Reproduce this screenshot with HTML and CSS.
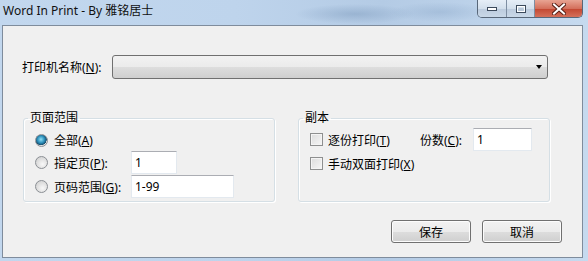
FILE: index.html
```html
<!DOCTYPE html>
<html lang="zh-CN">
<head>
    <meta charset="UTF-8">
    <title>Word In Print - By 雅铭居士</title>
    <link rel="stylesheet" href="styles.css">
</head>
<body>
    <div class="window">
        <div class="titlebar">
            <span class="title">Word In Print - By 雅铭居士</span>
            <div class="caption">
                <span class="cap cap-min">
                    <svg width="12" height="6" viewBox="0 0 12 6"><rect x="1.5" y="1.5" width="9" height="3" fill="#fff" stroke="#3c4a5c" stroke-width="1"/></svg>
                </span>
                <span class="cap cap-max">
                    <svg width="12" height="10" viewBox="0 0 12 10"><rect x="1.5" y="1.5" width="9" height="7" fill="none" stroke="#3c4a5c" stroke-width="1"/><rect x="2.5" y="2.5" width="7" height="5" fill="none" stroke="#fff" stroke-width="1"/><rect x="3.5" y="4" width="5" height="3" fill="#b8c7d8"/></svg>
                </span>
                <span class="cap cap-close">
                    <svg width="14" height="12" viewBox="0 0 14 12"><path d="M2 1.5 L12 10.5 M12 1.5 L2 10.5" stroke="#5a2218" stroke-width="4" stroke-linecap="square"/><path d="M2 1.5 L12 10.5 M12 1.5 L2 10.5" stroke="#fff" stroke-width="2" stroke-linecap="square"/></svg>
                </span>
            </div>
        </div>
        <div class="client">
            <div class="printer-row">
                <label class="printer-label">打印机名称(<u>N</u>):</label>
                <div class="combo"><span class="combo-arrow"></span></div>
            </div>
            <div class="groups">
                <fieldset class="group group-range">
                    <legend>页面范围</legend>
                    <div class="row row-first">
                        <span class="radio checked"></span>
                        <span>全部(<u>A</u>)</span>
                    </div>
                    <div class="row">
                        <span class="radio"></span>
                        <span class="field-label">指定页(<u>P</u>):</span>
                        <span class="textbox tb-page">1</span>
                    </div>
                    <div class="row">
                        <span class="radio"></span>
                        <span class="field-label">页码范围(<u>G</u>):</span>
                        <span class="textbox tb-range">1-99</span>
                    </div>
                </fieldset>
                <fieldset class="group group-copies">
                    <legend>副本</legend>
                    <div class="row">
                        <span class="check"></span>
                        <span class="collate-label">逐份打印(<u>T</u>)</span>
                        <span class="count-label">份数(<u>C</u>):</span>
                        <span class="textbox tb-count">1</span>
                    </div>
                    <div class="row">
                        <span class="check"></span>
                        <span>手动双面打印(<u>X</u>)</span>
                    </div>
                </fieldset>
            </div>
            <div class="actions">
                <button class="btn">保存</button>
                <button class="btn">取消</button>
            </div>
        </div>
    </div>
</body>
</html>
```

FILE: styles.css
```css
html, body {
    margin: 0;
    width: 588px;
    height: 261px;
    overflow: hidden;
}
body {
    font-family: "Noto Sans", "Noto Sans CJK SC", sans-serif;
    font-size: 12px;
    color: #000;
}
.window {
    height: 261px;
    display: flex;
    flex-direction: column;
    background: linear-gradient(90deg, #c2d7ee 0%, #bed4ec 40%, #b4cbe5 65%, #c6daef 100%);
}
.titlebar {
    height: 25px;
    display: flex;
    justify-content: space-between;
    align-items: flex-start;
    background:
        radial-gradient(ellipse 60px 10px at 355px 14px, rgba(120,150,185,0.45), transparent),
        radial-gradient(ellipse 50px 10px at 440px 12px, rgba(130,160,195,0.35), transparent);
}
.title {
    padding: 3px 0 0 3px;
    line-height: 16px;
    font-size: 12px;
    color: #111;
}
.caption {
    display: flex;
    margin-right: 5px;
    border: 1px solid #586779;
    border-top: none;
    border-radius: 0 0 5px 5px;
    overflow: hidden;
    height: 17px;
}
.cap {
    display: flex;
    align-items: center;
    justify-content: center;
    height: 17px;
}
.cap-min, .cap-max {
    width: 27px;
    background: linear-gradient(180deg, #e6eef7 0%, #d3dfec 50%, #bccbdd 51%, #c9d8e8 100%);
    border-right: 1px solid #7e8ea2;
}
.cap-min {
    width: 28px;
}
.cap-close {
    width: 47px;
    background: linear-gradient(180deg, #e8a493 0%, #d4705c 50%, #c24630 51%, #d5705a 100%);
}
.client {
    flex: 1;
    margin: 0 5px 3px 2px;
    border: 1px solid #7f8c9c;
    background: #f0f0f0;
    display: flex;
    flex-direction: column;
}
.printer-row {
    display: flex;
    align-items: center;
    padding: 29px 0 0 19px;
}
.printer-label {
    width: 90px;
    flex: none;
}
.combo {
    width: 434px;
    height: 22px;
    border: 1px solid #707070;
    border-radius: 3px;
    background: linear-gradient(180deg, #f2f2f2 0%, #ebebeb 50%, #dddddd 51%, #cfcfcf 100%);
    position: relative;
}
.combo-arrow {
    position: absolute;
    right: 5px;
    top: 9px;
    border-left: 3.5px solid transparent;
    border-right: 3.5px solid transparent;
    border-top: 4px solid #000;
}
.groups {
    display: flex;
    gap: 23px;
    padding-left: 20px;
    margin-top: 32px;
}
.group {
    width: 239px;
    height: 86px;
    margin: 0;
    padding: 3px 0 0 11px;
    border: 1px solid #d5dfe5;
    box-shadow: inset 1px 1px 0 #fff, 1px 1px 0 #fff;
    border-radius: 3px;
    box-sizing: content-box;
    min-width: 0;
}
.group legend {
    padding: 0 2px;
    margin-left: -7px;
    line-height: 14px;
}
.row {
    display: flex;
    align-items: center;
    height: 23px;
    margin-bottom: 1px;
}
.group-range .row-first {
    height: 20px;
    margin-top: 2px;
}
.radio {
    width: 11px;
    height: 11px;
    flex: none;
    border-radius: 50%;
    border: 1px solid #8b8f94;
    background: radial-gradient(circle at 60% 65%, #f8f8f8 0%, #d8d8d8 70%, #c8c8c8 100%);
    margin-right: 6px;
    box-sizing: content-box;
}
.radio.checked {
    background:
        radial-gradient(circle at 45% 40%, #8fe0f7 0%, #2a8db8 40%, #1a4f6e 62%, transparent 66%),
        radial-gradient(circle, #f4f4f4 0%, #d6d6d6 100%);
}
.check {
    width: 11px;
    height: 11px;
    flex: none;
    border: 1px solid #8e8f8f;
    background: linear-gradient(135deg, #dcdcdc 0%, #f6f6f6 100%);
    box-shadow: inset 0 0 0 1px #f4f4f4;
    margin-right: 5px;
    box-sizing: content-box;
}
.field-label {
    width: 77px;
    flex: none;
}
.textbox {
    height: 21px;
    line-height: 21px;
    box-sizing: content-box;
    border: 1px solid #e3e9ef;
    border-top-color: #abadb3;
    background: #fff;
    padding-left: 3px;
    font-size: 12px;
}
.tb-page {
    width: 41px;
}
.tb-range {
    width: 98px;
}
.collate-label {
    width: 92px;
    flex: none;
}
.count-label {
    width: 53px;
    flex: none;
}
.tb-count {
    width: 54px;
}
.actions {
    display: flex;
    justify-content: flex-end;
    gap: 11px;
    padding-right: 20px;
    margin-top: 18px;
}
.btn {
    width: 80px;
    height: 23px;
    font-family: "Noto Sans CJK SC", sans-serif;
    font-size: 12px;
    color: #000;
    border: 1px solid #707070;
    border-radius: 3px;
    background: linear-gradient(180deg, #f2f2f2 0%, #ebebeb 50%, #dddddd 51%, #cfcfcf 100%);
    box-shadow: inset 0 0 0 1px #fcfcfc;
    padding: 0;
}
```
